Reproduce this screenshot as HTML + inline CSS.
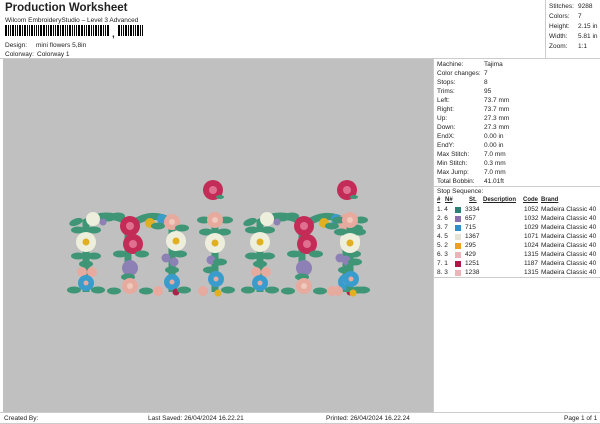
<!DOCTYPE html>
<html><head><style>
*{margin:0;padding:0;box-sizing:border-box}
body{width:600px;height:424px;background:#fff;font-family:"Liberation Sans",sans-serif;position:relative;overflow:hidden;color:#222}
.a{position:absolute;white-space:nowrap;font-size:6.5px;line-height:9px}
.t{font-size:11.5px;font-weight:bold;left:5px;top:2px;line-height:13px}
#gray{position:absolute;left:3px;top:59px;width:430px;height:353px;background:#c0c0c0}
#rp{position:absolute;left:433px;top:58px;width:167px;height:354px;border-left:1px solid #ccc;border-top:1px solid #ccc}
#tr{position:absolute;left:545px;top:0;width:55px;height:58px;border-left:1px solid #ccc}
.hline{position:absolute;left:0;width:600px;height:1px;background:#ccc}
.bc{position:absolute;top:25px;height:11px;width:1px;background:#000}
.sw{display:inline-block;width:6px;height:6px;vertical-align:middle}
.u{text-decoration:underline;font-weight:bold;font-size:6px}
</style></head><body>
<div class="a t">Production Worksheet</div>
<div class="a" style="left:5px;top:16px">Wilcom EmbroideryStudio – Level 3 Advanced</div>
<div id="bars"></div>
<div class="a" style="left:112px;top:30px;font-size:10px;font-weight:bold">,</div>
<div class="a" style="left:5px;top:41px">Design:</div><div class="a" style="left:36px;top:41px">mini flowers 5,8in</div>
<div class="a" style="left:5px;top:50px">Colorway:</div><div class="a" style="left:37px;top:50px">Colorway 1</div>
<div class="hline" style="top:58px"></div>
<div id="tr">
<div class="a" style="left:3px;top:2px">Stitches:</div><div class="a" style="left:32px;top:2px">9288</div>
<div class="a" style="left:3px;top:12px">Colors:</div><div class="a" style="left:32px;top:12px">7</div>
<div class="a" style="left:3px;top:22px">Height:</div><div class="a" style="left:32px;top:22px">2.15 in</div>
<div class="a" style="left:3px;top:32px">Width:</div><div class="a" style="left:32px;top:32px">5.81 in</div>
<div class="a" style="left:3px;top:42px">Zoom:</div><div class="a" style="left:32px;top:42px">1:1</div>
</div>
<div id="gray">
<svg width="430" height="353" viewBox="3 59 430 353" style="position:absolute;left:0;top:0">
<defs>
<g id="lv"><ellipse rx="7" ry="3.5" fill="#3e9676"/></g>
<g id="dz"><circle r="10" fill="#eeeedc"/><circle r="3.5" fill="#e0b020"/></g>
<g id="rs"><circle r="10" fill="#c42c58"/><circle r="4" fill="#e07090"/></g>
<g id="pr"><circle r="8" fill="#e6aa9e"/><circle r="3" fill="#f0c8bc"/></g>
<g id="bl"><circle r="8" fill="#3a9ccc"/><circle r="2.5" fill="#e6aa9e"/></g>
<g id="pu"><circle r="8" fill="#8c80b4"/></g>
<g id="m">
<path d="M18 82V12Q38 0 60 12V82M64 14Q84 0 104 12V82" stroke="#3e9676" stroke-width="7" fill="none"/>
<use href="#lv" x="8" y="12" transform="rotate(-20 8 12)"/><use href="#lv" x="40" y="8"/><use href="#lv" x="50" y="6"/>
<circle cx="25" cy="9" r="7" fill="#eeeedc"/><circle cx="35" cy="12" r="3.5" fill="#8c80b4"/>
<use href="#lv" x="10" y="20"/><use href="#lv" x="26" y="20"/>
<use href="#dz" x="18" y="32"/>
<use href="#lv" x="10" y="46"/><use href="#lv" x="26" y="46"/><use href="#lv" x="18" y="54"/>
<circle cx="14" cy="62" r="5" fill="#e6aa9e"/><circle cx="24" cy="62" r="5" fill="#e6aa9e"/>
<use href="#bl" x="18" y="73"/><use href="#lv" x="6" y="80"/><use href="#lv" x="30" y="80"/>
<use href="#rs" x="62" y="16"/><use href="#rs" x="65" y="34"/>
<use href="#lv" x="52" y="44"/><use href="#lv" x="74" y="44"/>
<use href="#pu" x="62" y="58"/><use href="#lv" x="60" y="67"/>
<use href="#pr" x="62" y="76"/><use href="#lv" x="46" y="81"/><use href="#lv" x="78" y="81"/>
<circle cx="82" cy="13" r="5" fill="#e0b020"/><circle cx="94" cy="9" r="5" fill="#3a9ccc"/><use href="#lv" x="90" y="16"/>
<use href="#pr" x="104" y="12"/><use href="#lv" x="114" y="18"/>
<use href="#dz" x="108" y="31"/><use href="#lv" x="112" y="44"/>
<circle cx="98" cy="48" r="4.5" fill="#8c80b4"/><circle cx="106" cy="52" r="4.5" fill="#8c80b4"/><use href="#lv" x="104" y="60"/>
<use href="#bl" x="104" y="72"/><circle cx="108" cy="82" r="3.5" fill="#b02048"/><circle cx="90" cy="81" r="5" fill="#e6aa9e"/><use href="#lv" x="116" y="80"/>
</g>
<g id="i">
<path d="M15 10V82" stroke="#3e9676" stroke-width="7"/>
<use href="#lv" x="4" y="10"/><use href="#lv" x="26" y="10"/><use href="#pr" x="15" y="10"/>
<use href="#lv" x="6" y="22"/><use href="#lv" x="24" y="22"/>
<use href="#dz" x="15" y="33"/>
<circle cx="11" cy="50" r="4.5" fill="#8c80b4"/><use href="#lv" x="20" y="52"/><use href="#lv" x="10" y="60"/>
<use href="#bl" x="16" y="69"/><circle cx="3" cy="81" r="5" fill="#e6aa9e"/><circle cx="18" cy="83" r="3.5" fill="#e0b020"/><use href="#lv" x="28" y="80"/>
</g>
<g id="dot"><circle r="10" fill="#c42c58"/><circle r="4" fill="#e07090"/><ellipse cx="7" cy="7" rx="4" ry="2" fill="#3e9676"/></g>
</defs>
<use href="#m" x="68" y="210"/>
<use href="#i" x="200" y="210"/>
<use href="#m" x="242" y="210"/>
<use href="#i" x="335" y="210"/>
<use href="#dot" x="213" y="190"/>
<use href="#dot" x="347" y="190"/>
</svg>
</div>
<div id="rp">
<div class="a" style="left:3px;top:1px">Machine:</div><div class="a" style="left:50px;top:1px">Tajima</div>
<div class="a" style="left:3px;top:10px">Color changes:</div><div class="a" style="left:50px;top:10px">7</div>
<div class="a" style="left:3px;top:19px">Stops:</div><div class="a" style="left:50px;top:19px">8</div>
<div class="a" style="left:3px;top:28px">Trims:</div><div class="a" style="left:50px;top:28px">95</div>
<div class="a" style="left:3px;top:37px">Left:</div><div class="a" style="left:50px;top:37px">73.7 mm</div>
<div class="a" style="left:3px;top:46px">Right:</div><div class="a" style="left:50px;top:46px">73.7 mm</div>
<div class="a" style="left:3px;top:55px">Up:</div><div class="a" style="left:50px;top:55px">27.3 mm</div>
<div class="a" style="left:3px;top:64px">Down:</div><div class="a" style="left:50px;top:64px">27.3 mm</div>
<div class="a" style="left:3px;top:73px">EndX:</div><div class="a" style="left:50px;top:73px">0.00 in</div>
<div class="a" style="left:3px;top:82px">EndY:</div><div class="a" style="left:50px;top:82px">0.00 in</div>
<div class="a" style="left:3px;top:91px">Max Stitch:</div><div class="a" style="left:50px;top:91px">7.0 mm</div>
<div class="a" style="left:3px;top:100px">Min Stitch:</div><div class="a" style="left:50px;top:100px">0.3 mm</div>
<div class="a" style="left:3px;top:109px">Max Jump:</div><div class="a" style="left:50px;top:109px">7.0 mm</div>
<div class="a" style="left:3px;top:118px">Total Bobbin:</div><div class="a" style="left:50px;top:118px">41.01ft</div>
<div style="position:absolute;left:0;top:127px;width:167px;height:1px;background:#ccc"></div>
<div class="a" style="left:3px;top:128px">Stop Sequence:</div>
<div class="a u" style="left:3px;top:137px">#</div>
<div class="a u" style="left:11px;top:137px">N#</div>
<div class="a u" style="left:35px;top:137px">St.</div>
<div class="a u" style="left:49px;top:137px">Description</div>
<div class="a u" style="left:89px;top:137px">Code</div>
<div class="a u" style="left:107px;top:137px">Brand</div>
<div id="rows"></div>
<div style="position:absolute;left:0;top:218px;width:167px;height:1px;background:#ccc"></div>
</div>
<div class="hline" style="top:412px"></div>
<div class="a" style="left:4px;top:414px">Created By:</div>
<div class="a" style="left:148px;top:414px">Last Saved: 26/04/2024 16.22.21</div>
<div class="a" style="left:326px;top:414px">Printed: 26/04/2024 16.22.24</div>
<div class="a" style="left:564px;top:414px">Page 1 of 1</div>
<div class="hline" style="top:423px"></div>
<script>
var b=document.getElementById('bars'),h='',x=5,w=[2,1,1,2,1,1,2,1,2,1,1,2,1,1,1,2];
for(var i=0;x<110;i++){var ww=w[i%w.length];h+='<div class="bc" style="left:'+x+'px;width:'+ww+'px"></div>';x+=ww+1;}
x=118;for(var i=0;x<144;i++){var ww=w[(i+3)%w.length];h+='<div class="bc" style="left:'+x+'px;width:'+ww+'px"></div>';x+=ww+1;}
b.innerHTML=h;
var r=[["1.","4","#2f7f76","3334","1052"],["2.","6","#8a6fb0","657","1032"],["3.","7","#2f8fc8","715","1029"],["4.","5","#e6e4d6","1367","1071"],["5.","2","#f0a020","295","1024"],["6.","3","#eab4b8","429","1315"],["7.","1","#b0184c","1251","1187"],["8.","3","#eab4b8","1238","1315"]],s='';
r.forEach(function(e,k){var y=146+k*9;s+='<div class="a" style="left:3px;top:'+y+'px">'+e[0]+' '+e[1]+'</div><div class="a" style="left:21px;top:'+(y+1)+'px"><span class="sw" style="background:'+e[2]+'"></span></div><div class="a" style="left:31px;top:'+y+'px">'+e[3]+'</div><div class="a" style="left:90px;top:'+y+'px">'+e[4]+'</div><div class="a" style="left:107px;top:'+y+'px">Madeira Classic 40</div>';});
document.getElementById('rows').innerHTML=s;
</script>
</body></html>
